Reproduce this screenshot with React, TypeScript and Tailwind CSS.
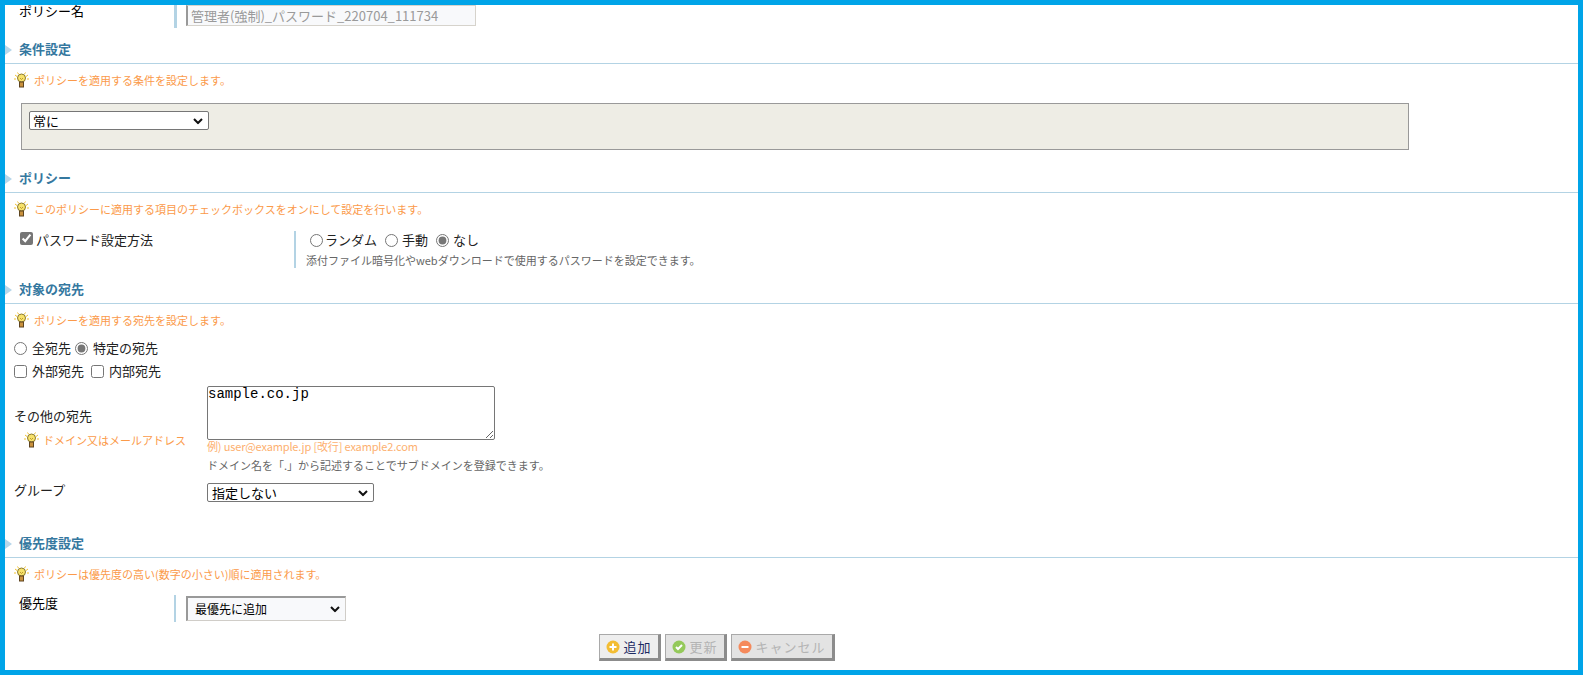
import React from 'react';

const FONT = { fontFamily: '"Noto Sans CJK JP", "Liberation Sans", sans-serif' };

const Bulb = () => (
  <svg width="15" height="16" viewBox="0 0 15 16" className="shrink-0">
    <g stroke="#f2c230" strokeWidth="1">
      <path d="M1 3l2 1.500M14 3l-2 1.500M0 7h2M13 7h2M3.500 0.500l1 1.500M11.500 0.500l-1 1.500" />
    </g>
    <circle cx="7.500" cy="6" r="4" fill="#f7e26a" stroke="#8a7a30" strokeWidth="1" />
    <path d="M6 6l1.500 1.500L9 6" fill="none" stroke="#b08a20" strokeWidth="0.800" />
    <rect x="5.500" y="10" width="4" height="5" fill="#c9913c" stroke="#5e4520" strokeWidth="1" />
  </svg>
);

const Heading = ({ title, className }: { title: string; className: string }) => (
  <div className={`flex h-[22px] items-center border-b border-[#b3d3e4] ${className}`}>
    <span className="mb-[6px] h-0 w-0 border-y-[5px] border-l-[7px] border-y-transparent border-l-[#b7d7ea]" />
    <span className="mb-[8px] ml-[7px] text-[13px] font-bold leading-none text-[#35789f]">{title}</span>
  </div>
);

const Hint = ({ text }: { text: string }) => (
  <div className="flex h-[32px] items-center gap-[5px] pl-[9px] text-[11px] text-[#fb9a4a]">
    <Bulb />
    <span>{text}</span>
  </div>
);

const Chevron = () => (
  <svg width="10" height="7" viewBox="0 0 10 7" className="absolute right-[5px] top-1/2 -translate-y-1/2">
    <path d="M1 1.500l4 4 4-4" fill="none" stroke="#111" strokeWidth="2" />
  </svg>
);

const ActionButton = ({
  label,
  color,
  glyph,
  disabled,
  width,
}: {
  label: string;
  color: string;
  glyph: string;
  disabled?: boolean;
  width: string;
}) => (
  <button
    className={`flex h-[27px] items-center justify-center gap-[3px] border border-r-[3px] border-b-[3px] border-[#a9a9a9] border-r-[#8c8c8c] border-b-[#8c8c8c] text-[13px] tracking-[1px] ${width} ${
      disabled ? 'bg-[#e3e3e3] text-[#b4b4b4]' : 'bg-[#eeeeee] text-[#1c2a63]'
    }`}
  >
    <svg width="14" height="14" viewBox="0 0 14 14">
      <circle cx="7" cy="7" r="6.500" fill={color} />
      <path d={glyph} fill="none" stroke="#fff" strokeWidth="2" />
    </svg>
    {label}
  </button>
);

const App = () => {
  return (
    <div style={FONT} className="h-[675px] w-[1583px] overflow-hidden border-[5px] border-[#00a4e8] bg-white text-[#222]">
      {/* ポリシー名 */}
      <div className="flex h-[23px]">
        <div className="w-[169px] pl-[14px] text-[13px] leading-[12px] text-black">ポリシー名</div>
        <div className="flex w-[3px] bg-[#b3d3e4]" />
        <div className="ml-[9px] flex h-[21px] w-[290px] items-center border border-l-2 border-[#d6d3cc] border-l-[#999] bg-[#f8f9fb] pl-[3px] text-[13px] text-[#9a9a9a]">
          管理者(強制)_パスワード_220704_111734
        </div>
      </div>

      <Heading title="条件設定" className="mt-[14px]" />
      <Hint text="ポリシーを適用する条件を設定します。" />
      <div className="ml-[16px] mt-[7px] h-[47px] w-[1388px] border border-[#999] bg-[#eeede5] pl-[7px] pt-[7px]">
        <div className="relative flex h-[19px] w-[180px] items-center rounded-[2px] border border-[#767676] bg-white pl-[3px] text-[13px] text-black">
          常に
          <Chevron />
        </div>
      </div>

      <Heading title="ポリシー" className="mt-[21px]" />
      <Hint text="このポリシーに適用する項目のチェックボックスをオンにして設定を行います。" />
      <div className="mt-[6px] flex h-[37px]">
        <label className="flex w-[289px] items-start pl-[15px] pt-[1px] text-[13px] leading-[16px]">
          <input type="checkbox" defaultChecked className="m-0 h-[13px] w-[13px] accent-[#767676]" />
          <span className="ml-[3px]">パスワード設定方法</span>
        </label>
        <div className="w-[2px] bg-[#b3d3e4]" />
        <div className="pl-[10px] pt-[2px]">
          <div className="flex items-center text-[13px] leading-[14px]">
            <input type="radio" name="pw" className="m-0 ml-[4px] h-[13px] w-[13px] accent-[#767676]" />
            <span className="ml-[2px]">ランダム</span>
            <input type="radio" name="pw" className="m-0 ml-[8px] h-[13px] w-[13px] accent-[#767676]" />
            <span className="ml-[4px]">手動</span>
            <input type="radio" name="pw" defaultChecked className="m-0 ml-[8px] h-[13px] w-[13px] accent-[#767676]" />
            <span className="ml-[4px]">なし</span>
          </div>
          <div className="mt-[7px] text-[11px] leading-[13px] text-[#666]">添付ファイル暗号化やwebダウンロードで使用するパスワードを設定できます。</div>
        </div>
      </div>

      <Heading title="対象の宛先" className="mt-[14px]" />
      <Hint text="ポリシーを適用する宛先を設定します。" />
      <div className="pl-[9px] text-[13px]">
        <div className="mt-[4px] flex h-[16px] items-center">
          <input type="radio" name="to" className="m-0 h-[13px] w-[13px] accent-[#767676]" />
          <span className="ml-[5px]">全宛先</span>
          <input type="radio" name="to" defaultChecked className="m-0 ml-[4px] h-[13px] w-[13px] accent-[#767676]" />
          <span className="ml-[5px]">特定の宛先</span>
        </div>
        <div className="mt-[7px] flex h-[16px] items-center">
          <input type="checkbox" className="m-0 h-[13px] w-[13px] accent-[#767676]" />
          <span className="ml-[5px]">外部宛先</span>
          <input type="checkbox" className="m-0 ml-[7px] h-[13px] w-[13px] accent-[#767676]" />
          <span className="ml-[5px]">内部宛先</span>
        </div>
        <div className="flex">
          <div className="w-[193px] pt-[29px]">
            <div className="h-[16px] leading-[16px]">その他の宛先</div>
            <div className="mt-[8px] flex items-center gap-[4px] pl-[10px] text-[11px] text-[#fb9a4a]">
              <Bulb />
              <span>ドメイン又はメールアドレス</span>
            </div>
          </div>
          <div className="mt-[7px]">
            <textarea
              defaultValue="sample.co.jp"
              className="m-0 block h-[54px] w-[288px] rounded-[2px] border border-[#767676] text-[14px] leading-[14px] text-black"
              style={{ fontFamily: '"Liberation Mono", monospace' }}
            />
            <div className="mt-[-1px] h-[14px] text-[11px] leading-[14px] tracking-[-0.15px] text-[#fdb06f]">例) user@example.jp [改行] example2.com</div>
            <div className="mt-[5px] h-[14px] text-[11px] leading-[14px] text-[#666]">ドメイン名を「.」から記述することでサブドメインを登録できます。</div>
          </div>
        </div>
        <div className="mt-[11px] flex">
          <div className="w-[193px] text-[13px] leading-[14px]">グループ</div>
          <div className="relative flex h-[19px] w-[167px] items-center rounded-[2px] border border-[#767676] bg-white pl-[4px] text-[13px] text-black">
            指定しない
            <Chevron />
          </div>
        </div>
      </div>

      <Heading title="優先度設定" className="mt-[34px]" />
      <Hint text="ポリシーは優先度の高い(数字の小さい)順に適用されます。" />
      <div className="mt-[5px] flex h-[27px]">
        <div className="w-[169px] pl-[14px] text-[13px] leading-[16px] text-black">優先度</div>
        <div className="w-[2px] bg-[#b3d3e4]" />
        <div className="relative ml-[10px] mt-[1px] flex h-[25px] w-[160px] items-center border border-t-2 border-l-2 border-[#d0cdc8] border-t-[#999] border-l-[#999] bg-[#f8f9fb] pl-[7px] text-[12px] text-black">
          最優先に追加
          <Chevron />
        </div>
      </div>

      <div className="ml-[594px] mt-[12px] flex gap-[4px]">
        <ActionButton label="追加" color="#f3bd33" glyph="M7 3.500v7M3.500 7h7" width="w-[62px]" />
        <ActionButton label="更新" color="#94c95a" glyph="M4 7l2 2 4-4" disabled width="w-[62px]" />
        <ActionButton label="キャンセル" color="#f58a5c" glyph="M3.500 7h7" disabled width="w-[104px]" />
      </div>
    </div>
  );
};

export default App;
